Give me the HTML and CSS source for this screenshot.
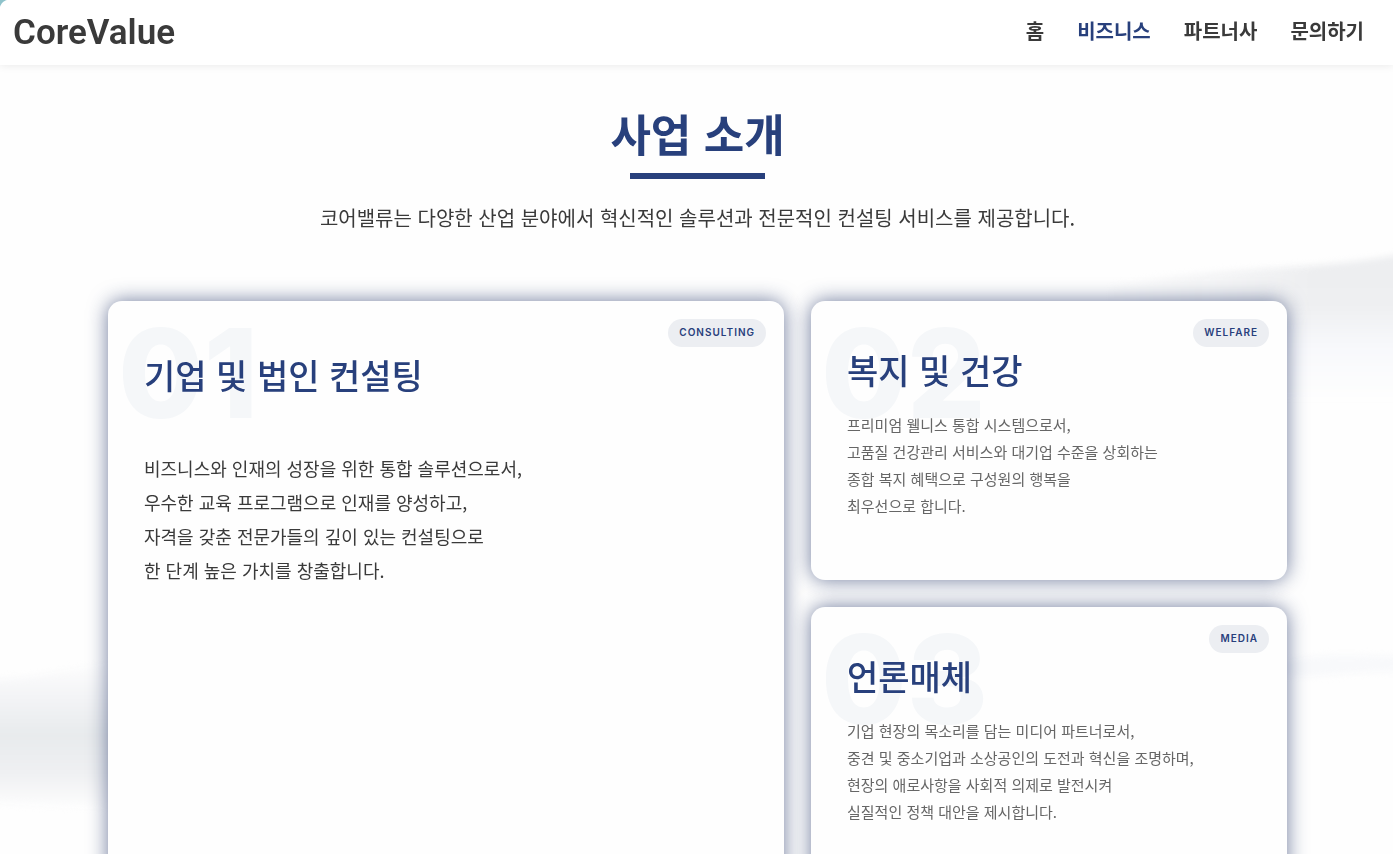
FILE: index.html
```html
<!DOCTYPE html>
<html lang="ko">
<head>
<meta charset="utf-8">
<meta name="viewport" content="width=device-width, initial-scale=1">
<title>CoreValue</title>
<link rel="stylesheet" href="styles.css">
</head>
<body>
<svg class="backdrop" viewBox="0 0 1393 854" preserveAspectRatio="none" aria-hidden="true">
  <defs>
    <linearGradient id="right" x1="0" y1="0" x2="0" y2="1">
      <stop offset="0" stop-color="#edeef0"/>
      <stop offset=".35" stop-color="#eeeff1"/>
      <stop offset=".65" stop-color="#f8f9fc"/>
      <stop offset="1" stop-color="#fefefe"/>
    </linearGradient>
    <linearGradient id="left" x1="0" y1="0" x2="0" y2="1">
      <stop offset="0" stop-color="#fefefe"/>
      <stop offset=".25" stop-color="#f3f4f6"/>
      <stop offset=".5" stop-color="#e8ebed"/>
      <stop offset=".75" stop-color="#eff0f2"/>
      <stop offset="1" stop-color="#fefefe"/>
    </linearGradient>
    <linearGradient id="fade" x1="0" y1="0" x2="1" y2="0">
      <stop offset="0" stop-color="#000"/>
      <stop offset=".7" stop-color="#fff"/>
    </linearGradient>
    <mask id="fade-in" maskUnits="userSpaceOnUse" x="1090" y="220" width="320" height="220">
      <path fill="url(#fade)" d="M1090 220H1410V440H1090Z"/>
    </mask>
    <filter id="soft" color-interpolation-filters="sRGB"><feGaussianBlur stdDeviation="3"/></filter>
  </defs>
  <g mask="url(#fade-in)">
    <path filter="url(#soft)" fill="url(#right)" d="M1110 285C1220 265 1320 272 1410 252V400H1110Z"/>
  </g>
  <g filter="url(#soft)">
    <path fill="url(#left)" d="M-20 680C30 680 80 665 130 660V810C80 810 30 805 -20 802Z"/>
    <path fill="#f8f9fb" d="M1280 662C1320 652 1350 656 1410 656V672C1350 670 1320 680 1280 676Z"/>
  </g>
</svg>

<header class="topbar">
  <a class="logo" href="#">CoreValue</a>
  <nav class="menu">
    <a href="#">홈</a>
    <a class="active" href="#" aria-current="page">비즈니스</a>
    <a href="#">파트너사</a>
    <a href="#">문의하기</a>
  </nav>
</header>

<main class="page">
  <section class="intro">
    <h1>사업 소개</h1>
    <p>코어밸류는 다양한 산업 분야에서 혁신적인 솔루션과 전문적인 컨설팅 서비스를 제공합니다.</p>
  </section>

  <section class="cards">
    <article class="card featured">
      <span class="number" aria-hidden="true">01</span>
      <span class="tag">CONSULTING</span>
      <h2>기업 및 법인 컨설팅</h2>
      <p>비즈니스와 인재의 성장을 위한 통합 솔루션으로서,<br>우수한 교육 프로그램으로 인재를 양성하고,<br>자격을 갖춘 전문가들의 깊이 있는 컨설팅으로<br>한 단계 높은 가치를 창출합니다.</p>
    </article>
    <article class="card">
      <span class="number" aria-hidden="true">02</span>
      <span class="tag">WELFARE</span>
      <h2>복지 및 건강</h2>
      <p>프리미엄 웰니스 통합 시스템으로서,<br>고품질 건강관리 서비스와 대기업 수준을 상회하는<br>종합 복지 혜택으로 구성원의 행복을<br>최우선으로 합니다.</p>
    </article>
    <article class="card">
      <span class="number" aria-hidden="true">03</span>
      <span class="tag">MEDIA</span>
      <h2>언론매체</h2>
      <p>기업 현장의 목소리를 담는 미디어 파트너로서,<br>중견 및 중소기업과 소상공인의 도전과 혁신을 조명하며,<br>현장의 애로사항을 사회적 의제로 발전시켜<br>실질적인 정책 대안을 제시합니다.</p>
    </article>
  </section>
</main>
</body>
</html>
```

FILE: styles.css
```css
* {
  box-sizing: border-box;
}

body {
  margin: 0;
  height: 100vh;
  overflow: hidden;
  display: flex;
  flex-direction: column;
  background: #fefefe;
  color: #3a3a3a;
  font-family: "Noto Sans CJK KR", sans-serif;
}

h1, h2, p {
  margin: 0;
}

a {
  color: inherit;
  text-decoration: none;
}

.backdrop {
  position: fixed;
  inset: 0;
  width: 100%;
  height: 100%;
  z-index: -1;
}

.topbar {
  flex: none;
  display: flex;
  align-items: center;
  justify-content: space-between;
  height: 65px;
  padding: 0 29px 0 13px;
  background: radial-gradient(circle at 10px 10px, #fff 10px, #8fc3cb 11px) 0 0 / 10px 10px no-repeat #fff;
  box-shadow: 0 1px 8px rgba(0, 0, 0, .08);
}

.logo {
  font-family: Roboto, sans-serif;
  font-size: 35px;
  font-weight: 600;
}

.menu {
  display: flex;
  gap: 33px;
  padding-bottom: 3px;
  font-size: 20px;
  font-weight: 700;
  line-height: 30px;
}

.menu .active {
  color: #28407c;
}

.page {
  flex: 1;
  min-height: 0;
  overflow-y: auto;
  scrollbar-width: none;
  padding: 36px 106px 48px 108px;
}

.intro {
  display: flex;
  flex-direction: column;
  align-items: center;
  text-align: center;
}

.intro h1 {
  font-size: 44px;
  font-weight: 700;
  line-height: 64px;
  color: #28407c;
}

.intro h1::after {
  content: "";
  display: block;
  width: 135px;
  height: 6px;
  margin: 8px auto 0;
  background: #28407c;
}

.intro p {
  margin-top: 24px;
  font-size: 20px;
  line-height: 30px;
}

.cards {
  display: grid;
  grid-template-columns: 676fr 476fr;
  grid-auto-rows: minmax(279px, auto);
  gap: 27px;
  margin-top: 68px;
}

.card {
  position: relative;
  padding: 45px 36px;
  border-radius: 14px;
  background: #fefefe;
  box-shadow: 0 0 20px rgba(36, 54, 104, .65);
}

.card h2 {
  position: relative;
  font-size: 34px;
  font-weight: 500;
  line-height: 48px;
  color: #28407c;
}

.card p {
  position: relative;
  margin-top: 17px;
  font-size: 15px;
  line-height: 27px;
  color: #666;
}

.featured {
  grid-row: span 2;
  padding-top: 50px;
}

.featured p {
  margin-top: 52px;
  font-size: 18px;
  line-height: 34px;
  color: #3a3a3a;
}

.number {
  position: absolute;
  top: 10px;
  left: 10px;
  font-family: Inter, sans-serif;
  font-size: 124px;
  font-weight: 800;
  line-height: 124px;
  color: #f5f7f9;
}

.tag {
  position: absolute;
  top: 18px;
  right: 18px;
  padding: 0 11px 2px;
  border-radius: 14px;
  background: #eceef2;
  color: #28407c;
  font-family: Inter, sans-serif;
  font-size: 10px;
  font-weight: 600;
  letter-spacing: 1px;
  line-height: 26px;
}
```
